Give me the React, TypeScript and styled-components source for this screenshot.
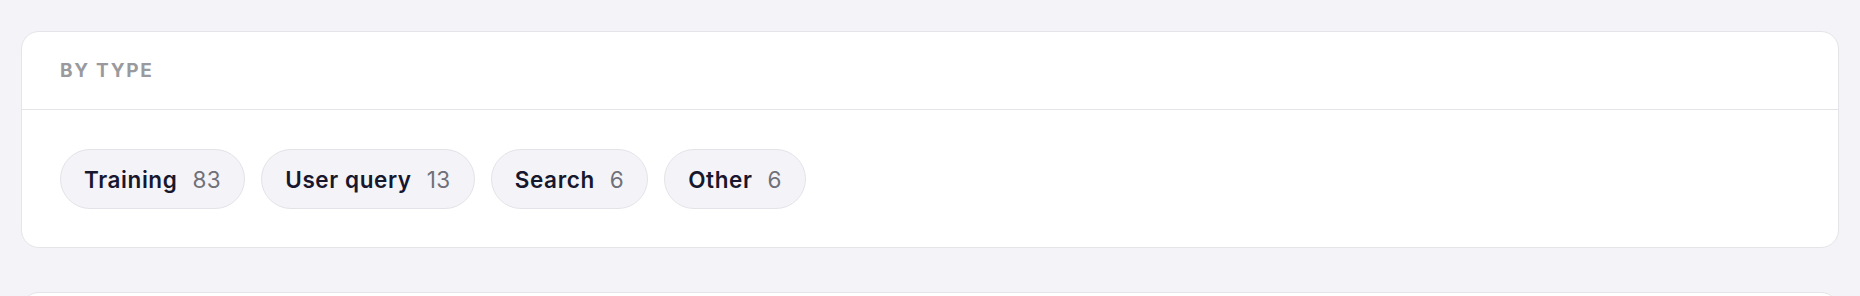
import React from "react";
import styled, { createGlobalStyle } from "styled-components";

const GlobalStyle = createGlobalStyle`
  html, body {
    margin: 0;
    padding: 0;
    background: #f4f4f8;
  }
  body {
    font-family: Inter, "Noto Sans", "DejaVu Sans", sans-serif;
    -webkit-font-smoothing: antialiased;
  }
`;

const Page = styled.div`
  display: flex;
  flex-direction: column;
  gap: 44px;
  padding: 31px 21px 0;
  box-sizing: border-box;
  width: 1860px;
  height: 296px;
  overflow: hidden;
`;

const Card = styled.section<{ $minHeight?: number }>`
  background: #ffffff;
  border: 1px solid #e4e4e9;
  border-radius: 18px;
  overflow: hidden;
  flex-shrink: 0;
  min-height: ${(p) => p.$minHeight ?? 0}px;
`;

const CardHeader = styled.header`
  height: 77px;
  display: flex;
  align-items: center;
  padding: 0 38px;
  border-bottom: 1px solid #e4e4e9;
`;

const HeaderLabel = styled.h3`
  margin: 0;
  font-size: 19px;
  font-weight: 700;
  letter-spacing: 0.09em;
  text-transform: uppercase;
  color: #9a9a9e;
`;

const ChipRow = styled.div`
  display: flex;
  flex-wrap: wrap;
  gap: 16px;
  padding: 39px 38px 38px;
`;

const Chip = styled.button`
  display: inline-flex;
  align-items: center;
  gap: 15px;
  height: 60px;
  box-sizing: border-box;
  padding: 0 23px;
  border: 1px solid #e2e2e8;
  border-radius: 999px;
  background: #f4f4f8;
  font-family: inherit;
  cursor: pointer;
`;

const ChipLabel = styled.span`
  font-size: 22.5px;
  font-weight: 600;
  letter-spacing: 0.6px;
  color: #17172e;
`;

const ChipCount = styled.span`
  font-size: 22.5px;
  font-weight: 400;
  letter-spacing: 0.5px;
  color: #707078;
`;

const types = [
  { label: "Training", count: 83 },
  { label: "User query", count: 13 },
  { label: "Search", count: 6 },
  { label: "Other", count: 6 },
];

export default function App() {
  return (
    <>
      <GlobalStyle />
      <Page>
        <Card>
          <CardHeader>
            <HeaderLabel>By type</HeaderLabel>
          </CardHeader>
          <ChipRow>
            {types.map((t) => (
              <Chip key={t.label}>
                <ChipLabel>{t.label}</ChipLabel>
                <ChipCount>{t.count}</ChipCount>
              </Chip>
            ))}
          </ChipRow>
        </Card>
        <Card $minHeight={120} />
      </Page>
    </>
  );
}
